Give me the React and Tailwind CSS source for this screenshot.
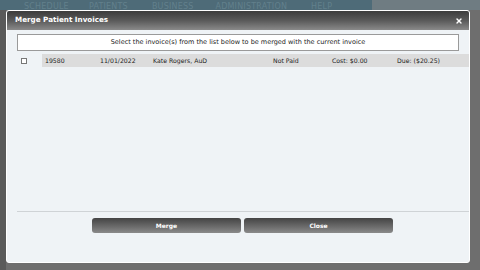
import { X } from 'lucide-react';

const rows = [
  { id: '19580', date: '11/01/2022', provider: 'Kate Rogers, AuD', status: 'Not Paid', cost: 'Cost: $0.00', due: 'Due: ($20.25)' },
];

const NavStrip = () => (
  <div className="flex h-[10px] items-end overflow-hidden bg-[#4e6b78] text-[8px] leading-[7px] tracking-wide text-[#62808c]">
    <span className="ml-[24px]">SCHEDULE</span>
    <span className="ml-[20px]">PATIENTS</span>
    <span className="ml-[24px]">BUSINESS</span>
    <span className="ml-[22px]">ADMINISTRATION</span>
    <span className="ml-[24px]">HELP</span>
    <div className="ml-auto h-full w-[108px] bg-[#6f7c82]" />
  </div>
);

export default function App() {
  return (
    <div className="relative h-[270px] w-[480px] overflow-hidden bg-[#6e6e6e]" style={{ fontFamily: '"DejaVu Sans", Verdana, sans-serif' }}>
      <NavStrip />
      <div className="h-[260px] w-[6px] bg-[#5a5a5a]" />

      {/* Dialog */}
      <div className="absolute left-[6px] top-[10px] flex h-[253px] w-[464px] flex-col overflow-hidden rounded-[3px] border border-white bg-[#eff3f6]">
        <div className="flex h-[19px] shrink-0 items-center justify-between bg-gradient-to-b from-[#3c3c3c] via-[#5a5a5a] to-[#8a8a8a] pl-[8px] pr-[6px]">
          <span className="text-[7.2px] font-bold text-white">Merge Patient Invoices</span>
          <X className="h-[8px] w-[8px] text-white" strokeWidth={4} />
        </div>

        <div className="flex flex-1 flex-col px-[10px] pt-[4px]">
          <div className="flex h-[17px] items-center justify-center border border-[#9a9a9a] bg-white text-[6.5px] text-[#222]">
            Select the invoice(s) from the list below to be merged with the current invoice
          </div>

          <div className="mt-[3px] flex flex-col">
            {rows.map((r) => (
              <div key={r.id} className="flex h-[13px] items-center text-[6.2px] text-[#222]">
                <div className="ml-[4px] mr-[15px] h-[6px] w-[6px] border border-[#777] bg-white" />
                <div className="-mr-[10px] flex h-full flex-1 items-center bg-[#dcdcdc]">
                  <span className="ml-[3px] w-[55px]">{r.id}</span>
                  <span className="w-[53px]">{r.date}</span>
                  <span className="w-[120px]">{r.provider}</span>
                  <span className="w-[59px]">{r.status}</span>
                  <span className="w-[65px]">{r.cost}</span>
                  <span>{r.due}</span>
                </div>
              </div>
            ))}
          </div>

          <div className="flex-1" />
          <div className="-mr-[10px] h-px bg-[#cfd3d6]" />
          <div className="flex h-[50px] justify-center gap-[3px] pl-[9px] pt-[6px]">
            <button className="h-[15px] w-[149px] rounded-[3px] bg-gradient-to-b from-[#444] to-[#8a8a8a] text-[6px] font-bold text-white">Merge</button>
            <button className="h-[15px] w-[149px] rounded-[3px] bg-gradient-to-b from-[#444] to-[#8a8a8a] text-[6px] font-bold text-white">Close</button>
          </div>
        </div>
      </div>
    </div>
  );
}
